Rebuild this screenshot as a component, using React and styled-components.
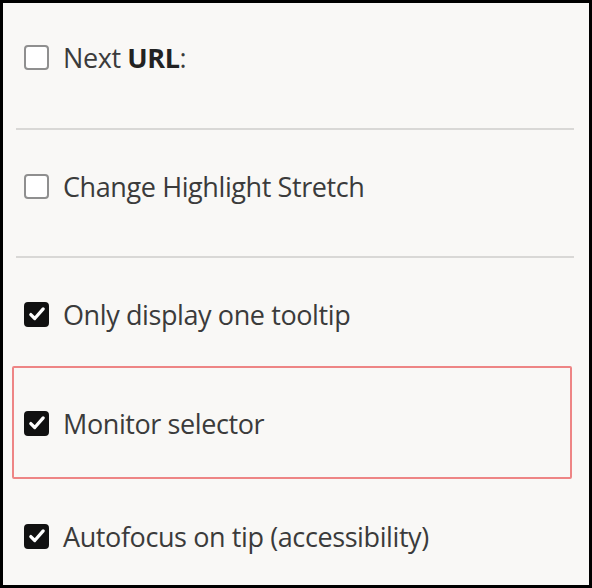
import React from "react";
import styled, { createGlobalStyle } from "styled-components";

const Global = createGlobalStyle`
  html, body { margin: 0; padding: 0; background: #000; }
  body { font-family: "Open Sans", "Noto Sans", sans-serif; }
`;

const Frame = styled.div`
  box-sizing: border-box;
  width: 592px;
  height: 588px;
  border: 3px solid #000;
  background: #f9f8f6;
  padding: 0 15px 0 9px;
  display: flex;
  flex-direction: column;
`;

const Item = styled.div`
  padding: ${(p) => p.$pt}px 0 ${(p) => p.$pb}px 12px;
`;

const Highlight = styled.div`
  margin-right: 2px;
  border: 2px solid #ee8585;
  border-radius: 2px;
  padding: 41px 0 40px 10px;
`;

const Divider = styled.hr`
  margin: 0 0 0 4px;
  border: none;
  height: 2px;
  background: #d9d8d6;
`;

const Row = styled.label`
  display: flex;
  align-items: center;
  gap: 14px;
  height: 28px;
  font-size: 27px;
  color: #3b3b3b;
  letter-spacing: -0.4px;
`;

const Box = styled.span`
  box-sizing: border-box;
  flex: none;
  width: 25px;
  height: 25px;
  border-radius: 4px;
  display: flex;
  align-items: center;
  justify-content: center;
  background: ${(p) => (p.$checked ? "#111" : "#fff")};
  border: 2px solid ${(p) => (p.$checked ? "#111" : "#8f8f8f")};
`;

const Strong = styled.b`
  font-weight: 700;
  color: #222;
`;

function Check({ checked }) {
  return (
    <Box $checked={checked}>
      {checked && (
        <svg width="18" height="18" viewBox="0 0 16 16">
          <path
            d="M2.5 8.5 L6 12 L13.5 3.5"
            fill="none"
            stroke="#fff"
            strokeWidth="2.9"
            strokeLinecap="round"
            strokeLinejoin="round"
          />
        </svg>
      )}
    </Box>
  );
}

export default function App() {
  return (
    <>
      <Global />
      <Frame>
        <Item $pt={40} $pb={57}>
          <Row>
            <Check />
            <span>
              Next <Strong>URL</Strong>:
            </span>
          </Row>
        </Item>
        <Divider />
        <Item $pt={42} $pb={56}>
          <Row>
            <Check />
            <span>Change Highlight Stretch</span>
          </Row>
        </Item>
        <Divider />
        <Item $pt={42} $pb={38}>
          <Row>
            <Check checked />
            <span>Only display one tooltip</span>
          </Row>
        </Item>
        <Highlight>
          <Row>
            <Check checked />
            <span>Monitor selector</span>
          </Row>
        </Highlight>
        <Item $pt={43} $pb={0}>
          <Row>
            <Check checked />
            <span>Autofocus on tip (accessibility)</span>
          </Row>
        </Item>
      </Frame>
    </>
  );
}
